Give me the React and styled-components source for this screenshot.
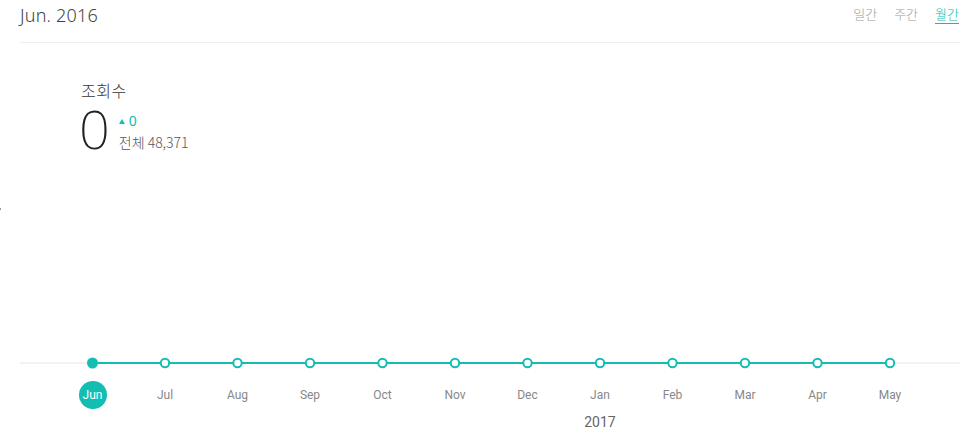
import React from "react";
import styled, { createGlobalStyle } from "styled-components";

const TEAL = "#13bdb2";

const GlobalStyle = createGlobalStyle`
  html, body {
    margin: 0;
    padding: 0;
    background: #fff;
    font-family: "Noto Sans", "Noto Sans CJK KR", sans-serif;
  }
`;

const Page = styled.div`
  position: relative;
  width: 970px;
  height: 440px;
  padding: 0 10px 0 20px;
  box-sizing: border-box;
  overflow: hidden;
`;

const Header = styled.div`
  height: 42px;
  display: flex;
  justify-content: space-between;
  align-items: flex-start;
  border-bottom: 1px solid #eeeeee;
`;

const Title = styled.h1`
  margin: 3px 0 0;
  font-size: 18px;
  font-weight: 300;
  color: #444;
  letter-spacing: 0.2px;
`;

const Tabs = styled.div`
  display: flex;
  gap: 17px;
  margin-top: 5px;
  margin-right: 1px;
`;

const Tab = styled.span`
  font-family: "Noto Sans CJK KR", sans-serif;
  font-size: 13px;
  font-weight: 300;
  color: ${(p) => (p.$active ? TEAL : "#9a9a9a")};
  border-bottom: 1px solid ${(p) => (p.$active ? TEAL : "transparent")};
  line-height: 17px;
  padding-bottom: 1px;
  cursor: pointer;
`;

const Stats = styled.div`
  padding: 35px 0 0 61px;
  height: 314px;
  box-sizing: border-box;
`;

const StatLabel = styled.div`
  font-family: "Noto Sans CJK KR", sans-serif;
  font-size: 16px;
  font-weight: 300;
  color: #333;
  line-height: 24px;
  letter-spacing: 0.5px;
`;

const StatRow = styled.div`
  display: flex;
  align-items: flex-start;
  gap: 9px;
`;

const BigNumber = styled.div`
  font-family: "Noto Sans", sans-serif;
  font-size: 54px;
  font-weight: 200;
  color: #222;
  line-height: 44px;
  margin: 4px 0 0 -2px;
`;

const StatSide = styled.div`
  display: flex;
  flex-direction: column;
  padding-top: 10px;
`;

const Delta = styled.div`
  display: flex;
  align-items: center;
  gap: 4px;
  color: ${TEAL};
  font-size: 14px;
  line-height: 18px;
`;

const Arrow = styled.span`
  width: 0;
  height: 0;
  border-left: 3.5px solid transparent;
  border-right: 3.5px solid transparent;
  border-bottom: 5px solid ${TEAL};
`;

const Total = styled.div`
  font-family: "Noto Sans CJK KR", sans-serif;
  font-size: 14px;
  font-weight: 300;
  color: #555;
  line-height: 20px;
  margin-top: 2px;
`;

const Chart = styled.div`
  width: 940px;
`;

const LineSvg = styled.svg`
  display: block;
  width: 940px;
  height: 12px;
`;

const Labels = styled.div`
  display: grid;
  grid-template-columns: repeat(12, 72.5px);
  padding-left: 36.25px;
  margin-top: 12px;
  height: 28px;
  align-items: center;
`;

const Label = styled.span`
  justify-self: center;
  font-family: Roboto, "Liberation Sans", sans-serif;
  font-size: 12px;
  color: ${(p) => (p.$active ? "#fff" : "#888")};
  width: 28px;
  height: 28px;
  line-height: 28px;
  text-align: center;
  border-radius: 50%;
  background: ${(p) => (p.$active ? TEAL : "transparent")};
`;

const Years = styled.div`
  display: grid;
  grid-template-columns: repeat(12, 72.5px);
  padding-left: 36.25px;
  margin-top: 5px;
`;

const Year = styled.span`
  grid-column: ${(p) => p.$col};
  justify-self: center;
  font-family: Roboto, "Liberation Sans", sans-serif;
  font-size: 14px;
  color: #666;
`;

const EdgeMark = styled.span`
  position: absolute;
  left: 0;
  top: 208px;
  width: 1px;
  height: 2px;
  background: #999;
`;

const months = ["Jun", "Jul", "Aug", "Sep", "Oct", "Nov", "Dec", "Jan", "Feb", "Mar", "Apr", "May"];

export default function App() {
  const step = 72.5;
  const xs = months.map((_, i) => step * (i + 1));
  return (
    <Page>
      <GlobalStyle />
      <EdgeMark />
      <Header>
        <Title>Jun. 2016</Title>
        <Tabs>
          <Tab>일간</Tab>
          <Tab>주간</Tab>
          <Tab $active>월간</Tab>
        </Tabs>
      </Header>
      <Stats>
        <StatLabel>조회수</StatLabel>
        <StatRow>
          <BigNumber>0</BigNumber>
          <StatSide>
            <Delta>
              <Arrow />0
            </Delta>
            <Total>전체 48,371</Total>
          </StatSide>
        </StatRow>
      </Stats>
      <Chart>
        <LineSvg viewBox="0 0 940 12">
          <line x1="0" y1="6" x2="940" y2="6" stroke="#e6e6e6" strokeWidth="1" />
          <line x1={xs[0]} y1="6" x2={xs[11]} y2="6" stroke={TEAL} strokeWidth="2" />
          {xs.map((x, i) =>
            i === 0 ? (
              <circle key={i} cx={x} cy="6" r="5.5" fill={TEAL} />
            ) : (
              <circle key={i} cx={x} cy="6" r="4.2" fill="#fff" stroke={TEAL} strokeWidth="2" />
            )
          )}
        </LineSvg>
        <Labels>
          {months.map((m, i) => (
            <Label key={m} $active={i === 0}>{m}</Label>
          ))}
        </Labels>
        <Years>
          <Year $col={8}>2017</Year>
        </Years>
      </Chart>
    </Page>
  );
}
